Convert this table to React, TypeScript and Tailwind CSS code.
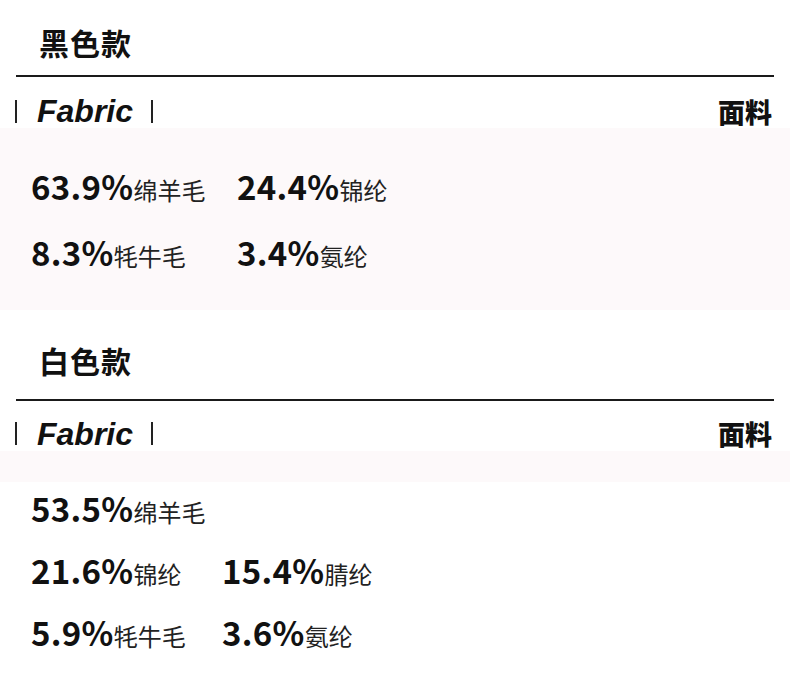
import React from "react";

const CJK = "font-['Noto_Sans_CJK_SC','Noto_Sans',sans-serif]";

type Item = { pct: string; name: string };

function Bar() {
  return <span className="block w-[2px] h-[23px] bg-[#222]" />;
}

function Header({ pt, h }: { pt: string; h: string }) {
  return (
    <div className={`flex items-center justify-between pl-[15px] pr-[18px] ${pt} ${h}`}>
      <div className="flex items-center">
        <Bar />
        <span className="ml-[20px] mr-[18px] font-['Liberation_Sans',Arial,sans-serif] italic font-bold text-[32px] leading-none text-[#111]">
          Fabric
        </span>
        <Bar />
      </div>
      <span className={`${CJK} font-black text-[27px] leading-none text-[#111]`}>面料</span>
    </div>
  );
}

function Cell({ item, w }: { item: Item; w: string }) {
  return (
    <div className={`${w} flex items-baseline`}>
      <span className={`${CJK} font-bold text-[33px] leading-none text-[#111] tracking-[0.3px]`}>{item.pct}</span>
      <span className={`${CJK} font-normal text-[24px] leading-none text-[#222]`}>{item.name}</span>
    </div>
  );
}

function Row({ items, w, h }: { items: Item[]; w: string; h: string }) {
  return (
    <div className={`flex items-center ${h}`}>
      {items.map((it, i) => (
        <Cell key={i} item={it} w={i === 0 ? w : "w-auto"} />
      ))}
    </div>
  );
}

export default function App() {
  return (
    <div className="w-[790px] h-[695px] bg-white overflow-hidden">
      {/* Section 1 */}
      <div className={`${CJK} pt-[27px] pl-[39px] text-[30px] leading-[30px] font-bold tracking-[1px] text-[#111]`}>
        黑色款
      </div>
      <div className="mx-[16px] mt-[18px] h-[2px] bg-[#1a1a1a]" />
      <Header pt="pt-[17px]" h="h-[51px]" />
      <div className="bg-[#fdf9fa] pt-[25px] pb-[25px] pl-[31px]">
        <Row
          h="h-[66px]"
          w="w-[206px]"
          items={[
            { pct: "63.9%", name: "绵羊毛" },
            { pct: "24.4%", name: "锦纶" },
          ]}
        />
        <Row
          h="h-[66px]"
          w="w-[206px]"
          items={[
            { pct: "8.3%", name: "牦牛毛" },
            { pct: "3.4%", name: "氨纶" },
          ]}
        />
      </div>

      {/* Section 2 */}
      <div className={`${CJK} mt-[35px] pl-[39px] text-[30px] leading-[30px] font-bold tracking-[1px] text-[#111]`}>
        白色款
      </div>
      <div className="mx-[16px] mt-[24px] h-[2px] bg-[#1a1a1a]" />
      <Header pt="pt-[15px]" h="h-[50px]" />
      <div className="bg-[#fdf9fa] h-[31px]" />
      <div className="pl-[31px] -mt-[5px]">
        <Row h="h-[62px]" w="w-[191px]" items={[{ pct: "53.5%", name: "绵羊毛" }]} />
        <Row
          h="h-[62px]"
          w="w-[191px]"
          items={[
            { pct: "21.6%", name: "锦纶" },
            { pct: "15.4%", name: "腈纶" },
          ]}
        />
        <Row
          h="h-[62px]"
          w="w-[191px]"
          items={[
            { pct: "5.9%", name: "牦牛毛" },
            { pct: "3.6%", name: "氨纶" },
          ]}
        />
      </div>
    </div>
  );
}
